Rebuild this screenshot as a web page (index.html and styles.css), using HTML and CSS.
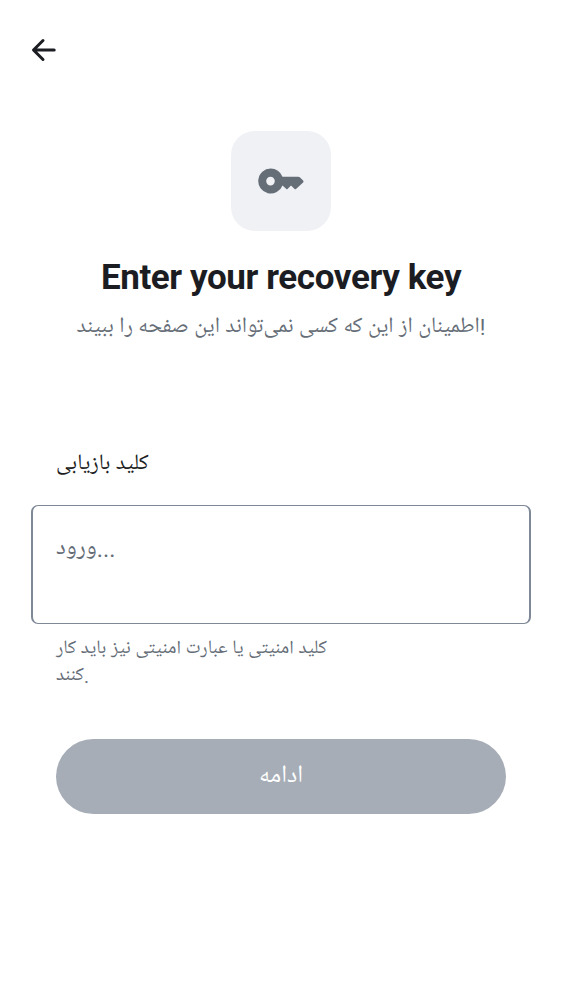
FILE: index.html
```html
<!DOCTYPE html>
<html lang="fa">
<head>
<meta charset="utf-8">
<title>Recovery key</title>
<link rel="stylesheet" href="styles.css">
</head>
<body>
<main class="screen">
  <header class="topbar">
    <svg class="back" viewBox="0 0 26 26" width="26" height="26"><path d="M24.2 13H4M13 3.5 3.5 13l9.500 9.500" fill="none" stroke="#1b1d22" stroke-width="3" stroke-linecap="round" stroke-linejoin="round"/></svg>
  </header>
  <section class="hero">
    <div class="tile">
      <svg viewBox="0 0 46 28" width="46" height="28"><path fill="#656d77" fill-rule="evenodd" d="M12.600 1.600a12.500 12.500 0 1 0 11.900 16.800l3.800 3.500q.6.500 1.200 0l3.500-3.300 3.600 3.300q.7.600 1.400 0l7.100-6.500q.8-.9 0-1.800l-3.300-3.300q-.6-.6-1.500-.6H24.500A12.500 12.500 0 0 0 12.600 1.600Zm-.1 8.200a4.300 4.300 0 1 1 0 8.600 4.300 4.300 0 0 1 0-8.600Z"/></svg>
    </div>
    <h1 class="title">Enter your recovery key</h1>
    <p class="subtitle">اطمینان از این که کسی نمی‌تواند این صفحه را ببیند!</p>
  </section>
  <form class="form">
    <label class="label">کلید بازیابی</label>
    <div class="field">ورود...</div>
    <p class="hint">کلید امنیتی یا عبارت امنیتی نیز باید کار کنند.</p>
    <button class="submit" type="button">ادامه</button>
  </form>
</main>
</body>
</html>
```
FILE: styles.css
```css
* { box-sizing: border-box; }
body {
  margin: 0;
  background: #fff;
  color: #1b1d22;
  font-family: Roboto, "Noto Naskh Arabic UI", "Noto Naskh Arabic", "Droid Arabic Naskh", serif;
}
.screen { height: 1000px; overflow: hidden; }
.topbar { height: 131px; padding: 37px 0 0 30px; }
.back { display: block; }
.hero { display: flex; flex-direction: column; align-items: center; height: 311px; }
.tile {
  width: 100px;
  height: 100px;
  border-radius: 24px;
  background: #f0f1f5;
  display: flex;
  align-items: center;
  justify-content: center;
}
.title { margin: 26px 0 0; font-size: 35px; line-height: 42px; font-weight: 700; letter-spacing: -0.4px; white-space: nowrap; }
.subtitle { margin: 13px 0 0; font-size: 22px; line-height: 32px; color: #656d77; white-space: nowrap; }
.form { padding: 0 31px; display: flex; flex-direction: column; }
.label { margin-left: 25px; height: 63px; font-size: 22px; line-height: 46px; }
.field { height: 119px; padding: 24px 23px; border: 2px solid #7e8896; border-top-width: 1px; border-bottom-width: 1px; border-radius: 7px; font-size: 23.5px; line-height: 38px; color: #656d77; }
.hint { margin: 13px 0 0 25px; width: 280px; height: 102px; font-size: 19px; line-height: 26.500px; color: #656d77; }
.submit { margin: 0 25px; padding: 0 0 3px; height: 75px; border: 0; border-radius: 38px; background: #a6adb7; color: #fff; font: inherit; font-size: 24.5px; }
```
